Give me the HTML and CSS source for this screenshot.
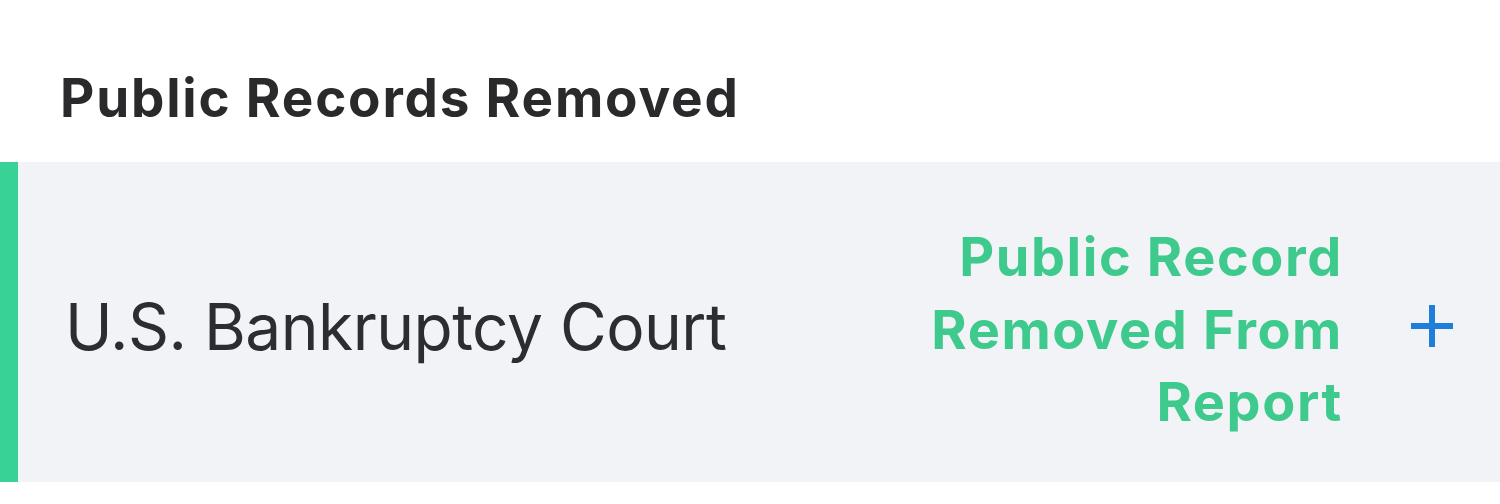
FILE: index.html
```html
<!DOCTYPE html>
<html lang="en">

<head>
  <meta charset="UTF-8">
  <meta name="viewport" content="width=device-width, initial-scale=1.0">
  <title>Public Records Removed</title>

  <link rel="stylesheet" href="styles.css">
</head>

<body>
  <h2 class="section-title">Public Records Removed</h2>

  <div class="record">
    <div class="record-name">U.S. Bankruptcy Court</div>
    <div class="record-status">Public Record<br>Removed From<br>Report</div>
    <button class="record-toggle" type="button" aria-label="Expand">
      <svg width="46" height="46" viewBox="0 0 46 46">
        <path d="M23 2v42M2 23h42" stroke="#1f7fd8" stroke-width="6" fill="none" />
      </svg>
    </button>
  </div>
</body>

</html>
```

FILE: styles.css
```css
* {
  padding: 0;
  margin: 0;
  box-sizing: border-box;
}

body {
  background: #fff;
  font-family: Inter, "Noto Sans", sans-serif;
  color: #2b2c30;
}

.section-title {
  padding: 66px 0 0 60px;
  font-size: 53px;
  line-height: 64px;
  font-weight: 700;
  letter-spacing: 1.8px;
  color: #2a2a2c;
}

.record {
  display: flex;
  align-items: center;
  height: 320px;
  margin-top: 32px;
  padding: 0 45px 0 47px;
  background: #f2f3f7;
  border-left: 18px solid #38d297;
}

.record-name {
  flex: 1;
  padding-top: 8px;
  font-size: 64px;
  font-weight: 400;
  letter-spacing: -0.5px;
  color: #2b2d33;
}

.record-status {
  padding-top: 16px;
  text-align: right;
  font-size: 54px;
  line-height: 72.5px;
  font-weight: 700;
  letter-spacing: 1.6px;
  color: #3fca8d;
}

.record-toggle {
  display: flex;
  margin: 8px 0 0 66px;
  border: 0;
  background: none;
}

.record-toggle:hover {
  cursor: pointer;
}
```
